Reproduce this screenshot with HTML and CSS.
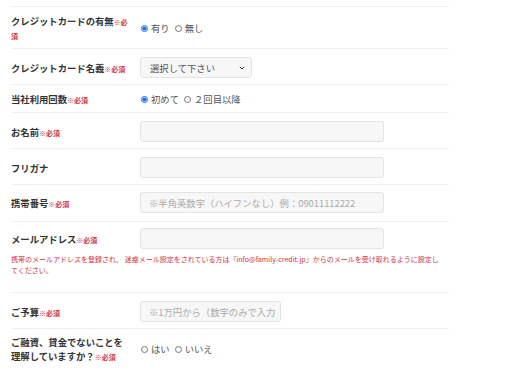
FILE: index.html
```html
<!DOCTYPE html>
<html lang="ja">
<head>
<meta charset="utf-8">
<link rel="stylesheet" href="styles.css">
</head>
<body>
<div class="form">
  <div class="row row-tall">
    <div class="label">クレジットカードの有無<span class="req">※必須</span></div>
    <div class="field">
      <label class="opt"><input type="radio" name="card" checked>有り</label>
      <label class="opt"><input type="radio" name="card">無し</label>
    </div>
  </div>
  <div class="row">
    <div class="label">クレジットカード名義<span class="req">※必須</span></div>
    <div class="field">
      <div class="select">選択して下さい<svg class="chev" width="6" height="4" viewBox="0 0 6 4"><path d="M0.8 0.8 L3 3 L5.2 0.8" fill="none" stroke="#333" stroke-width="1"/></svg></div>
    </div>
  </div>
  <div class="row row-short">
    <div class="label">当社利用回数<span class="req">※必須</span></div>
    <div class="field">
      <label class="opt"><input type="radio" name="times" checked>初めて</label>
      <label class="opt"><input type="radio" name="times">２回目以降</label>
    </div>
  </div>
  <div class="row">
    <div class="label">お名前<span class="req">※必須</span></div>
    <div class="field"><div class="input"></div></div>
  </div>
  <div class="row">
    <div class="label">フリガナ</div>
    <div class="field"><div class="input"></div></div>
  </div>
  <div class="row row-phone">
    <div class="label">携帯番号<span class="req">※必須</span></div>
    <div class="field"><div class="input">※半角英数字（ハイフンなし）例：09011112222</div></div>
  </div>
  <div class="row row-note">
    <div class="label">メールアドレス<span class="req">※必須</span></div>
    <div class="field"><div class="input"></div></div>
    <p class="note">携帯のメールアドレスを登録され、 迷惑メール設定をされている方は『info@family-credit.jp』からのメールを受け取れるように設定し<br>てください。</p>
  </div>
  <div class="row">
    <div class="label">ご予算<span class="req">※必須</span></div>
    <div class="field"><div class="input input-short">※1万円から（数字のみで入力</div></div>
  </div>
  <div class="row row-last">
    <div class="label">ご融資、貸金でないことを理解していますか？<span class="req">※必須</span></div>
    <div class="field">
      <label class="opt"><input type="radio" name="ok">はい</label>
      <label class="opt"><input type="radio" name="ok">いいえ</label>
    </div>
  </div>
</div>
</body>
</html>
```
FILE: styles.css
```css
* { box-sizing: border-box; }
html, body {
  margin: 0;
  padding: 0;
  background: #fff;
}
body {
  font-family: "Noto Sans CJK JP", "Noto Sans", sans-serif;
  color: #333;
  overflow: hidden;
}
.form {
  margin-left: 11px;
  width: 438px;
  padding-top: 6px;
}
.row {
  display: flex;
  flex-wrap: wrap;
  align-items: center;
  border-top: 1px solid #f0f0f0;
  padding: 8px 0 6px;
}
.row-tall { padding: 7px 0 6px; }
.row-short { padding: 7px 0 6px; }
.row-phone { padding: 7px 0 8px; }
.row-note { padding: 6px 0 0; }
.row-last { padding: 6px 0 6px; }
.label {
  width: 129px;
  padding-right: 8px;
  font-size: 9.33px;
  line-height: 14px;
  font-weight: bold;
  color: #333;
}
.req {
  font-size: 7px;
  line-height: 1;
  color: #d0343c;
  font-weight: bold;
}
.field {
  display: flex;
  align-items: center;
  flex: 1;
}
.opt {
  display: flex;
  align-items: center;
  height: 14px;
  font-size: 9.33px;
  line-height: 14px;
  color: #555;
  margin-right: 4px;
}
.opt input {
  width: 7px;
  height: 7px;
  margin: 0 3px 0 1px;
  accent-color: #1a73e8;
}
.select {
  width: 112px;
  height: 21px;
  background: #f7f7f7;
  border: 1px solid #e4e4e4;
  border-radius: 3px;
  font-size: 9.33px;
  color: #555;
  padding: 0 6px 0 9px;
  display: flex;
  align-items: center;
  justify-content: space-between;
}
.chev { display: block; }
.input {
  width: 244px;
  height: 21px;
  background: #f7f7f7;
  border: 1px solid #e4e4e4;
  border-radius: 3px;
  font-size: 9.33px;
  color: #aaa;
  padding: 0 8px;
  display: flex;
  align-items: center;
  white-space: nowrap;
  overflow: hidden;
}
.input-short { width: 141px; }
.note {
  flex: 0 0 444px;
  width: 444px;
  margin: 5px 0 16px;
  font-size: 7px;
  line-height: 11px;
  color: #d0343c;
}
```
